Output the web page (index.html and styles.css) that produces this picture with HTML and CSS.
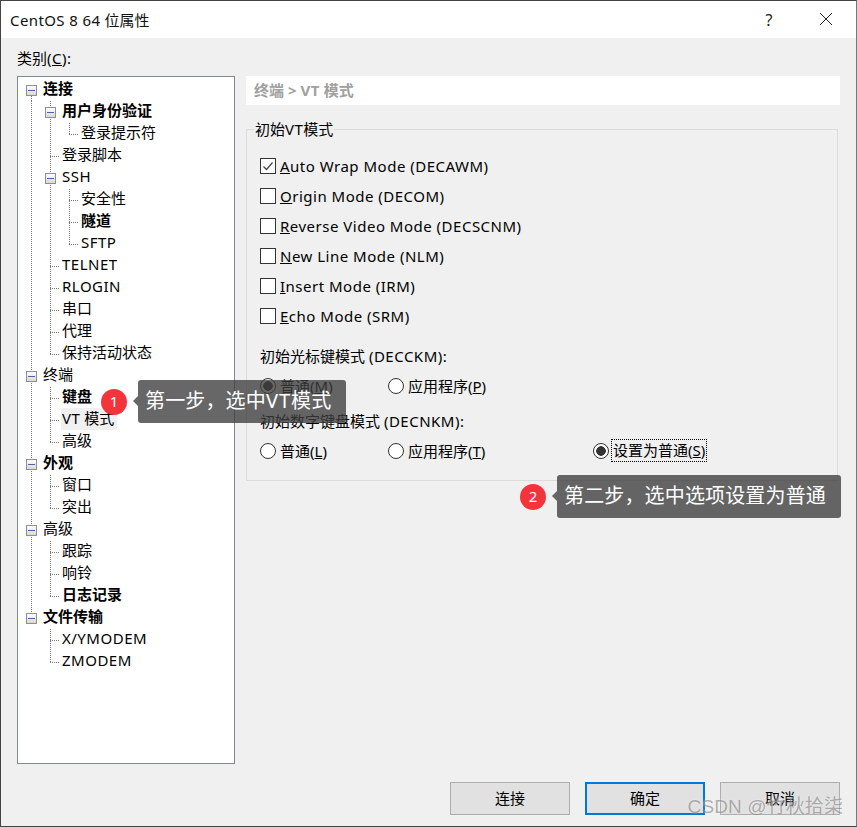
FILE: index.html
```html
<!DOCTYPE html>
<html lang="zh-CN">
<head>
    <meta charset="UTF-8">
    <title>CentOS 8 64 位属性</title>
    <link rel="stylesheet" href="styles.css">
</head>
<body>
<div class="window">
    <div class="titlebar">
        <span class="title"><span class="lat-title">CentOS 8 64</span> 位属性</span>
        <span class="help">?</span>
        <svg class="close" width="12" height="12" viewBox="0 0 12 12"><path d="M0 0L12 12M12 0L0 12" stroke="#222" stroke-width="1" fill="none"/></svg>
    </div>
    <div class="content">
        <div class="main">
            <div class="sidebar">
                <div class="cat-label">类别<span class="lat">(<u>C</u>):</span></div>
                <div class="tree">
                    <div class="row"><span class="cell down"><i class="box"></i></span><span class="text b">连接</span></div>
                    <div class="row"><span class="cell line"></span><span class="cell line"><i class="box"></i></span><span class="text b">用户身份验证</span></div>
                    <div class="row"><span class="cell line"></span><span class="cell line"></span><span class="cell end"></span><span class="text">登录提示符</span></div>
                    <div class="row"><span class="cell line"></span><span class="cell tee"></span><span class="text">登录脚本</span></div>
                    <div class="row"><span class="cell line"></span><span class="cell line"><i class="box"></i></span><span class="text lat">SSH</span></div>
                    <div class="row"><span class="cell line"></span><span class="cell line"></span><span class="cell tee"></span><span class="text">安全性</span></div>
                    <div class="row"><span class="cell line"></span><span class="cell line"></span><span class="cell tee"></span><span class="text b">隧道</span></div>
                    <div class="row"><span class="cell line"></span><span class="cell line"></span><span class="cell end"></span><span class="text lat">SFTP</span></div>
                    <div class="row"><span class="cell line"></span><span class="cell tee"></span><span class="text lat">TELNET</span></div>
                    <div class="row"><span class="cell line"></span><span class="cell tee"></span><span class="text lat">RLOGIN</span></div>
                    <div class="row"><span class="cell line"></span><span class="cell tee"></span><span class="text">串口</span></div>
                    <div class="row"><span class="cell line"></span><span class="cell tee"></span><span class="text">代理</span></div>
                    <div class="row"><span class="cell line"></span><span class="cell end"></span><span class="text">保持活动状态</span></div>
                    <div class="row"><span class="cell line"><i class="box"></i></span><span class="text">终端</span></div>
                    <div class="row"><span class="cell line"></span><span class="cell tee"></span><span class="text b">键盘</span></div>
                    <div class="row"><span class="cell line"></span><span class="cell tee"></span><span class="text selected"><span class="lat">VT</span> 模式</span></div>
                    <div class="row"><span class="cell line"></span><span class="cell end"></span><span class="text">高级</span></div>
                    <div class="row"><span class="cell line"><i class="box"></i></span><span class="text b">外观</span></div>
                    <div class="row"><span class="cell line"></span><span class="cell tee"></span><span class="text">窗口</span></div>
                    <div class="row"><span class="cell line"></span><span class="cell end"></span><span class="text">突出</span></div>
                    <div class="row"><span class="cell line"><i class="box"></i></span><span class="text">高级</span></div>
                    <div class="row"><span class="cell line"></span><span class="cell tee"></span><span class="text">跟踪</span></div>
                    <div class="row"><span class="cell line"></span><span class="cell tee"></span><span class="text">响铃</span></div>
                    <div class="row"><span class="cell line"></span><span class="cell end"></span><span class="text b">日志记录</span></div>
                    <div class="row"><span class="cell up"><i class="box"></i></span><span class="text b">文件传输</span></div>
                    <div class="row"><span class="cell"></span><span class="cell tee"></span><span class="text lat">X/YMODEM</span></div>
                    <div class="row"><span class="cell"></span><span class="cell end"></span><span class="text lat">ZMODEM</span></div>
                </div>
            </div>
            <div class="panel">
                <div class="crumb">终端 &gt; <span class="lat">VT</span> 模式</div>
                <fieldset class="group">
                    <legend>初始<span class="lat">VT</span>模式</legend>
                    <div class="check-row"><span class="check"><svg width="14" height="14" viewBox="0 0 14 14"><path d="M2.5 7.5L5.5 10.5L11.5 3.5" stroke="#444" stroke-width="1.2" fill="none"/></svg></span><span class="lat"><u>A</u>uto Wrap Mode (DECAWM)</span></div>
                    <div class="check-row"><span class="check"></span><span class="lat"><u>O</u>rigin Mode (DECOM)</span></div>
                    <div class="check-row"><span class="check"></span><span class="lat"><u>R</u>everse Video Mode (DECSCNM)</span></div>
                    <div class="check-row"><span class="check"></span><span class="lat"><u>N</u>ew Line Mode (NLM)</span></div>
                    <div class="check-row"><span class="check"></span><span class="lat"><u>I</u>nsert Mode (IRM)</span></div>
                    <div class="check-row"><span class="check"></span><span class="lat"><u>E</u>cho Mode (SRM)</span></div>
                    <div class="sub-label first">初始光标键模式 <span class="lat">(DECCKM):</span></div>
                    <div class="radio-row">
                        <div class="radio-item"><span class="radio on"></span><span class="radio-text">普通(<u>M</u>)</span></div>
                        <div class="radio-item"><span class="radio"></span><span class="radio-text">应用程序(<u>P</u>)</span></div>
                    </div>
                    <div class="sub-label second">初始数字键盘模式 <span class="lat">(DECNKM):</span></div>
                    <div class="radio-row">
                        <div class="radio-item"><span class="radio"></span><span class="radio-text">普通(<u>L</u>)</span></div>
                        <div class="radio-item"><span class="radio"></span><span class="radio-text">应用程序(<u>T</u>)</span></div>
                        <div class="radio-item"><span class="radio on"></span><span class="focused">设置为普通(<u>S</u>)</span></div>
                    </div>
                </fieldset>
            </div>
        </div>
        <div class="footer">
            <button class="btn">连接</button>
            <button class="btn primary">确定</button>
            <button class="btn">取消</button>
        </div>
    </div>

    <div class="note note-one">
        <span class="dot">1</span>
        <span class="bubble">第一步，选中<span class="lat-wide">VT</span>模式</span>
    </div>
    <div class="note note-two">
        <span class="dot">2</span>
        <span class="bubble">第二步，选中选项设置为普通</span>
    </div>
    <div class="watermark">CSDN @竹秋拾柒</div>
</div>
</body>
</html>
```

FILE: styles.css
```css
* { box-sizing: border-box; }
html, body { margin: 0; padding: 0; }
body { font-family: "Noto Sans", "Noto Sans CJK SC", sans-serif; font-size: 15px; color: #000; background: #f0f0f0; }

.lat { letter-spacing: .5px; }
.lat-title { letter-spacing: .4px; }
.lat-wide { letter-spacing: 1px; }

.window { position: relative; width: 857px; height: 827px; border: 1px solid #444; border-right-color: #777; background: #f0f0f0; overflow: hidden; display: flex; flex-direction: column; }

.titlebar { height: 37px; flex: none; background: #fff; display: flex; align-items: center; padding-left: 9px; }
.title { flex: 1; font-size: 15px; color: #111; }
.help { width: 12px; margin-right: 45px; font-size: 16px; color: #222; text-align: center; }
.close { margin-right: 24px; margin-bottom: 1px; }

.content { flex: 1; display: flex; flex-direction: column; padding: 0 16px; }
.main { display: flex; gap: 11px; }

.sidebar { width: 218px; flex: none; }
.cat-label { height: 38px; padding-top: 9px; line-height: 22px; }
.tree { height: 688px; border: 1px solid #828790; background: #fff; padding: 2px 0 0 4px; }

.row { display: flex; height: 22.03px; line-height: 20px; }
.cell { width: 19px; height: 100%; flex: none; display: flex; align-items: center; justify-content: center; background-repeat: no-repeat; }
.line { background-image: repeating-linear-gradient(to bottom, #777 0 1px, transparent 1px 2px); background-position: 9px 0; background-size: 1px 100%; }
.down { background-image: repeating-linear-gradient(to bottom, #777 0 1px, transparent 1px 2px); background-position: 9px 11px; background-size: 1px 11px; }
.up { background-image: repeating-linear-gradient(to bottom, #777 0 1px, transparent 1px 2px); background-position: 9px 0; background-size: 1px 11px; }
.tee, .end { background-image: repeating-linear-gradient(to bottom, #777 0 1px, transparent 1px 2px), repeating-linear-gradient(to right, #777 0 1px, transparent 1px 2px); background-position: 9px 0, 9px 11px; }
.tee { background-size: 1px 100%, 10px 1px; }
.end { background-size: 1px 11px, 10px 1px; }

.box { position: relative; display: block; width: 11px; height: 11px; border: 1px solid #8e8f8f; background: linear-gradient(#fff, #d8d8d8); }
.box::after { content: ""; position: absolute; left: 1px; top: 4px; width: 7px; height: 1px; background: #4a62a8; }

.text { margin-left: 1px; padding: 0 1px; margin-top: -1px; height: 22px; white-space: nowrap; }
.b { font-weight: bold; }
.selected { background: #f0f0f0; padding-right: 3px; }

.panel { flex: 1; padding-top: 38px; }
.crumb { height: 29px; background: #fff; padding-left: 8px; line-height: 28px; font-weight: bold; color: #a0a0a0; }

.group { margin: 13px 2px 0 0; padding: 11px 0 14px 13px; border: 1px solid #dcdcdc; height: 363px; }
.group legend { margin-left: -6px; padding: 0 1px; line-height: 22px; }

.check-row { height: 30px; display: flex; align-items: center; gap: 4px; white-space: nowrap; }
.check { width: 16px; height: 16px; flex: none; border: 1px solid #333; background: #fff; display: block; line-height: 0; }

.sub-label { height: 22px; line-height: 22px; }
.sub-label.first { margin-top: 14px; }
.sub-label.second { margin-top: 9px; }
.radio-row { height: 30px; margin-top: 4px; display: grid; grid-template-columns: 128px 205px auto; align-items: center; }
.radio-item { display: flex; align-items: center; gap: 4px; white-space: nowrap; }
.radio-text { padding-bottom: 2px; }
.radio { width: 16px; height: 16px; flex: none; border: 1px solid #333; border-radius: 50%; background: #fff; }
.radio.on { background: radial-gradient(circle, #333 0 4.5px, #fff 5px); }
.focused { outline: 1px dotted #000; margin-left: -1px; margin-bottom: 2px; padding: 0 1px; line-height: 21px; }

.footer { display: flex; justify-content: flex-end; gap: 15px; padding-top: 18px; }
.btn { width: 120px; height: 33px; background: #e1e1e1; border: 1px solid #adadad; font: inherit; color: #000; padding: 0 0 2px; }
.btn.primary { border: 2px solid #0078d7; }

.note { position: absolute; display: flex; align-items: center; gap: 11px; }
.note-one { left: 100px; top: 379px; }
.note-two { left: 519px; top: 474px; }
.dot { width: 26px; height: 26px; border-radius: 50%; background: #f5333a; color: #fff; font-size: 15px; line-height: 25px; text-align: center; }
.bubble { position: relative; height: 43px; padding: 0 15px 0 7px; line-height: 42px; font-size: 20px; letter-spacing: .15px; color: #fff; background: rgba(60, 60, 60, .78); border-radius: 3px; white-space: nowrap; }
.bubble::before { content: ""; position: absolute; left: -5px; top: 16px; border: 5px solid transparent; border-left: 0; border-right-color: rgba(60, 60, 60, .78); }

.watermark { position: absolute; right: 13px; bottom: 7px; font-family: "Liberation Sans", "Noto Sans CJK SC", sans-serif; font-size: 19px; letter-spacing: .1px; line-height: 24px; color: rgba(110, 110, 110, .55); text-shadow: 0 0 2px rgba(255, 255, 255, .6); white-space: nowrap; }
```
